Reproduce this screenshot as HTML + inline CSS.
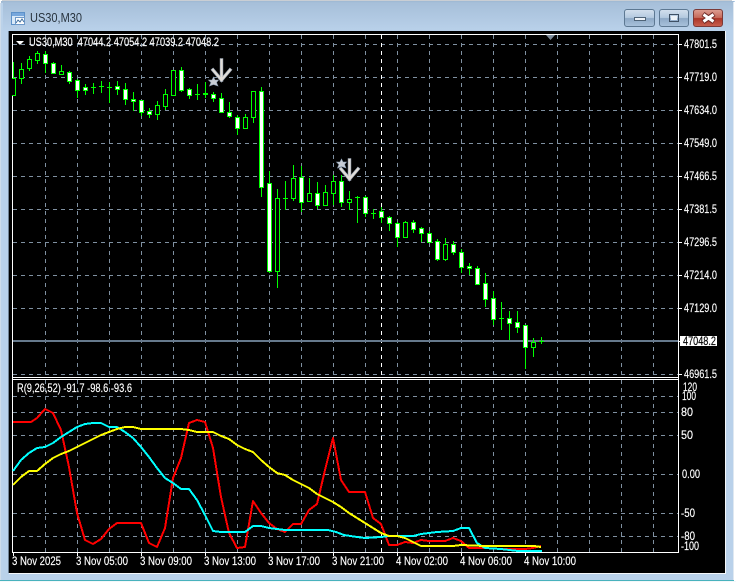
<!DOCTYPE html>
<html>
<head>
<meta charset="utf-8">
<title>US30,M30</title>
<style>
html,body{margin:0;padding:0;background:#fff}
body{width:736px;height:582px;overflow:hidden;position:relative}
svg{position:absolute;left:0;top:0;display:block}
text{font-family:"Liberation Sans",sans-serif;font-size:12px;fill:#fff;stroke:#fff;stroke-width:.15px}
.c{shape-rendering:crispEdges}
</style>
</head>
<body>
<svg width="736" height="582" viewBox="0 0 736 582" xmlns="http://www.w3.org/2000/svg">
<defs>
<linearGradient id="tb" x1="0" y1="0" x2="0" y2="1"><stop offset="0" stop-color="#9db7d2"/><stop offset=".05" stop-color="#a6bfd9"/><stop offset="1" stop-color="#b9d1ea"/></linearGradient>
<linearGradient id="bt" x1="0" y1="0" x2="0" y2="1"><stop offset="0" stop-color="#d3e0ee"/><stop offset=".48" stop-color="#b4c9df"/><stop offset=".52" stop-color="#8ea9c6"/><stop offset="1" stop-color="#a9c2dc"/></linearGradient>
<linearGradient id="cl" x1="0" y1="0" x2="0" y2="1"><stop offset="0" stop-color="#dd9f93"/><stop offset=".48" stop-color="#c66a5b"/><stop offset=".52" stop-color="#ab3527"/><stop offset="1" stop-color="#c9604f"/></linearGradient>
<linearGradient id="lf" x1="0" y1="0" x2="1" y2="0"><stop offset="0" stop-color="#e4e8ec"/><stop offset=".3" stop-color="#bcd2e9"/><stop offset="1" stop-color="#b9d1ea"/></linearGradient>
</defs>

<!-- window frame -->
<rect x="1" y="1" width="734" height="581" fill="#b9d1ea"/>
<rect x="1" y="1" width="733" height="30" fill="url(#tb)"/>
<rect x="0" y="3" width="3" height="579" fill="url(#lf)"/>
<rect x="2" y="0" width="730" height="1" fill="#c9ced4"/>
<rect x="733" y="2" width="1" height="578" fill="#dfe8f1"/>
<rect x="734" y="2" width="2" height="580" fill="#fff"/>
<rect x="0" y="580" width="734" height="1" fill="#49b2bd"/>
<rect x="0" y="581" width="736" height="1" fill="#f4f8fa"/>
<rect x="9" y="31" width="716" height="542" fill="#000"/>
<rect x="9" y="573" width="717" height="1" fill="#f4f7fa"/>
<rect x="725" y="31" width="1" height="543" fill="#f4f7fa"/>
<rect x="8" y="31" width="1" height="542" fill="#6f8193"/>

<!-- title icon -->
<g class="c">
<rect x="11.5" y="12.5" width="13" height="12" fill="#d9e9f8" stroke="#5d91c9"/>
<rect x="12" y="13" width="12" height="3" fill="#77a7dc"/>
<rect x="15.5" y="17.5" width="9" height="7" fill="#fff" stroke="#6f99c8"/>
</g>
<path d="M16 23l2-3 2 2 2-3 2 3" fill="none" stroke="#3f6f9f"/>
<text x="30" y="22" style="font-size:12.5px;fill:#27333e;stroke:none" textLength="52" lengthAdjust="spacingAndGlyphs">US30,M30</text>

<!-- buttons -->
<rect x="624.5" y="9.5" width="30" height="17" rx="2.5" fill="url(#bt)" stroke="#5d7892"/>
<rect x="659.5" y="9.5" width="29" height="17" rx="2.5" fill="url(#bt)" stroke="#5d7892"/>
<rect x="693.5" y="9.5" width="29" height="17" rx="2.5" fill="url(#cl)" stroke="#7b3a38"/>
<rect x="634.5" y="17.5" width="11" height="3" fill="#eef3f8" stroke="#4f6478" class="c"/>
<rect x="669.5" y="14.5" width="9" height="7" fill="none" stroke="#3e5064" stroke-width="1" class="c"/>
<rect x="671" y="16" width="6" height="4" fill="#eef3f8" class="c"/>
<path d="M703 14l11 8M714 14l-11 8" stroke="#6e2a25" stroke-width="5" fill="none"/>
<path d="M703.5 14.5l10 7M713.5 14.5l-10 7" stroke="#fff" stroke-width="3" fill="none"/>

<!-- grid -->
<g class="c" fill="none" stroke="#7f90a1" stroke-width="1" stroke-dasharray="4 4">
<path d="M13 44.5H678M13 77.5H678M13 110.5H678M13 143.5H678M13 176.5H678M13 209.5H678M13 242.5H678M13 275.5H678M13 308.5H678M13 374.5H678"/>
<path d="M13 396.5H678M13 412.5H678M13 435.5H678M13 474.5H678M13 513.5H678M13 536.5H678"/>
<path d="M45.5 35V377M77.5 35V377M109.5 35V377M141.5 35V377M173.5 35V377M205.5 35V377M237.5 35V377M269.5 35V377M301.5 35V377M333.5 35V377M365.5 35V377M397.5 35V377M429.5 35V377M461.5 35V377M493.5 35V377M525.5 35V377M557.5 35V377M589.5 35V377M621.5 35V377M653.5 35V377"/>
<path d="M45.5 380V552M77.5 380V552M109.5 380V552M141.5 380V552M173.5 380V552M205.5 380V552M237.5 380V552M269.5 380V552M301.5 380V552M333.5 380V552M365.5 380V552M397.5 380V552M429.5 380V552M461.5 380V552M493.5 380V552M525.5 380V552M557.5 380V552M589.5 380V552M621.5 380V552M653.5 380V552"/>
<path d="M381.5 35V377M381.5 380V552" stroke="#fff"/>
</g>
<rect x="13" y="340" width="665" height="2" fill="#66798c" class="c"/>

<!-- shift triangle -->
<path d="M546 35h9l-4.500 5z" fill="#7b8a99"/>

<!-- frame -->
<g class="c" fill="none" stroke="#fff" stroke-width="1">
<path d="M12.500 34.500H678.500V552.500H12.500z"/>
<path d="M12 377.500H679M12 379.500H679"/>
<path d="M13.500 553V556M77.500 553V556M141.500 553V556M205.500 553V556M269.500 553V556M333.500 553V556M397.500 553V556M461.500 553V556M525.500 553V556"/>
<path d="M679 44.500H682M679 77.500H682M679 110.500H682M679 143.500H682M679 176.500H682M679 209.500H682M679 242.500H682M679 275.500H682M679 308.500H682M679 374.500H682"/>
</g>

<!-- candles: wicks and doji bars -->
<g class="c">
<path fill="#00ff00" d="M13 62h1V95h-1zM21 63h1V84h-1zM29 56h1V71h-1zM37 51h1V64h-1zM45 51h1V73h-1zM53 62h1V74h-1zM61 65h1V75h-1zM69 71h1V84h-1zM77 79h1V98h-1zM85 84h1V95h-1zM93 83h1V94h-1zM101 81h1V93h-1zM109 82h1V103h-1zM117 81h1V95h-1zM125 83h1V105h-1zM133 92h1V111h-1zM141 100h1V116h-1zM149 108h1V118h-1zM157 101h1V120h-1zM165 89h1V110h-1zM173 70h1V96h-1zM181 67h1V92h-1zM189 88h1V99h-1zM197 84h1V100h-1zM205 82h1V98h-1zM213 92h1V102h-1zM221 93h1V112h-1zM229 102h1V118h-1zM237 115h1V135h-1zM245 114h1V128h-1zM253 91h1V123h-1zM261 87h1V197h-1zM269 171h1V273h-1zM277 189h1V288h-1zM285 181h1V210h-1zM293 165h1V201h-1zM301 166h1V212h-1zM309 178h1V202h-1zM317 182h1V209h-1zM325 185h1V205h-1zM333 175h1V205h-1zM341 175h1V207h-1zM349 191h1V210h-1zM357 196h1V223h-1zM365 196h1V217h-1zM373 209h1V219h-1zM381 207h1V223h-1zM389 216h1V231h-1zM397 222h1V247h-1zM405 221h1V237h-1zM413 220h1V233h-1zM421 227h1V242h-1zM429 231h1V243h-1zM437 239h1V261h-1zM445 238h1V261h-1zM453 241h1V255h-1zM461 249h1V273h-1zM469 263h1V275h-1zM477 266h1V285h-1zM485 273h1V307h-1zM493 291h1V325h-1zM501 302h1V330h-1zM509 311h1V340h-1zM517 311h1V333h-1zM525 325h1V369h-1zM533 338h1V357h-1zM541 337h1V344h-1z"/>
<path fill="#00ff00" d="M91 87h5v1h-5zM99 86h5v1h-5zM107 87h5v1h-5zM283 198h5v1h-5zM355 197h5v1h-5zM371 213h5v1h-5zM499 318h5v1h-5zM539 341h5v1h-5zM195 94h5v1h-5zM203 93h5v2h-5z"/>
<!-- bodies outer -->
<path fill="#00ff00" d="M12 78h4V96h-4zM19 69h5V79h-5zM27 59h5V69h-5zM35 53h5V61h-5zM59 71h5V75h-5zM155 105h5V115h-5zM163 94h5V107h-5zM171 70h5V96h-5zM243 117h5V129h-5zM251 91h5V118h-5zM275 198h5V272h-5zM291 178h5V199h-5zM307 193h5V202h-5zM323 192h5V206h-5zM331 181h5V194h-5zM347 199h5V203h-5zM403 222h5V238h-5zM443 244h5V260h-5zM531 342h5V348h-5z"/>
<path fill="#00ff00" d="M43 54h5V64h-5zM51 63h5V74h-5zM67 72h5V82h-5zM75 80h5V91h-5zM83 87h5V91h-5zM115 86h5V90h-5zM123 89h5V100h-5zM131 99h5V102h-5zM139 100h5V113h-5zM147 111h5V115h-5zM179 70h5V91h-5zM187 89h5V96h-5zM211 94h5V99h-5zM219 98h5V113h-5zM227 112h5V117h-5zM235 117h5V129h-5zM259 91h5V188h-5zM267 183h5V272h-5zM299 177h5V203h-5zM315 193h5V206h-5zM339 181h5V203h-5zM363 197h5V214h-5zM379 211h5V218h-5zM387 217h5V224h-5zM395 223h5V238h-5zM411 222h5V230h-5zM419 228h5V234h-5zM427 233h5V243h-5zM435 241h5V260h-5zM451 244h5V253h-5zM459 252h5V268h-5zM467 266h5V269h-5zM475 268h5V285h-5zM483 283h5V300h-5zM491 298h5V320h-5zM507 318h5V324h-5zM515 322h5V328h-5zM523 325h5V348h-5z"/>
<!-- hollow inner -->
<path fill="#000" d="M12 79h3V95h-3zM20 70h3V78h-3zM28 60h3V68h-3zM36 54h3V60h-3zM60 72h3V74h-3zM156 106h3V114h-3zM164 95h3V106h-3zM172 71h3V95h-3zM244 118h3V128h-3zM252 92h3V117h-3zM276 199h3V271h-3zM292 179h3V198h-3zM308 194h3V201h-3zM324 193h3V205h-3zM332 182h3V193h-3zM348 200h3V202h-3zM404 223h3V237h-3zM444 245h3V259h-3zM532 343h3V347h-3z"/>
<!-- white inner -->
<path fill="#fff" d="M44 55h3V63h-3zM52 64h3V73h-3zM68 73h3V81h-3zM76 81h3V90h-3zM84 88h3V90h-3zM116 87h3V89h-3zM124 90h3V99h-3zM132 100h3V101h-3zM140 101h3V112h-3zM148 112h3V114h-3zM180 71h3V90h-3zM188 90h3V95h-3zM212 95h3V98h-3zM220 99h3V112h-3zM228 113h3V116h-3zM236 118h3V128h-3zM260 92h3V187h-3zM268 184h3V271h-3zM300 178h3V202h-3zM316 194h3V205h-3zM340 182h3V202h-3zM364 198h3V213h-3zM380 212h3V217h-3zM388 218h3V223h-3zM396 224h3V237h-3zM412 223h3V229h-3zM420 229h3V233h-3zM428 234h3V242h-3zM436 242h3V259h-3zM452 245h3V252h-3zM460 253h3V267h-3zM468 267h3V268h-3zM476 269h3V284h-3zM484 284h3V299h-3zM492 299h3V319h-3zM508 319h3V323h-3zM516 323h3V327h-3zM524 326h3V347h-3z"/>
</g>

<!-- arrows -->
<g fill="none" stroke-linecap="square">
<path d="M221.500 60V80M213 70l8.500 10 8.500-10" stroke="#a6afbc" stroke-width="3.400"/>
<path d="M221.500 60V80M213 70l8.500 10 8.500-10" stroke="#e2ded8" stroke-width="2"/>
<path d="M349.500 160V179M341 169l8.500 10 8.500-10" stroke="#a6afbc" stroke-width="3.400"/>
<path d="M349.500 160V179M341 169l8.500 10 8.500-10" stroke="#e2ded8" stroke-width="2"/>
</g>
<path d="M213.500 77l1.500 3 3.500 0-2 2.500 1.500 3.500-4.500-1.500-4 1.500 1.500-3.500-2.500-2.500 3.500 0z" fill="#c9cdd4" stroke="#8fa0b4" stroke-width=".6"/>
<path d="M341.500 159l1.500 3 3.500 0-2 2.500 1.500 3.500-4.500-1.500-4 1.500 1.500-3.500-2.500-2.500 3.500 0z" fill="#c9cdd4" stroke="#8fa0b4" stroke-width=".6"/>

<!-- indicator -->
<g fill="none" stroke-width="2" class="c" stroke-linejoin="round">
<polyline stroke="#ff0000" points="13,422 31,422 37,418 45,409 53,413 61,430 69,467 77,513 85,540 93,544 101,539 109,529 117,523 141,523 149,543 157,547 165,528 173,478 181,458 189,423 197,420 205,422 213,448 221,497 229,533 237,548 245,547 253,501 261,513 269,523 277,529 285,532 293,524 301,524 309,510 317,504 325,470 333,438 341,480 349,492 365,492 373,518 381,524 389,545 397,545 405,542 413,543 421,540 429,541 445,541 453,538 461,541 469,548 485,548 501,549 525,549 533,548 541,546"/>
<polyline stroke="#00ffff" points="13,471 21,460 29,453 37,448 45,447 53,443 61,437 69,432 77,427 85,424 93,423 101,423 109,427 117,427 125,432 133,438 141,447 149,457 157,468 165,478 173,483 181,489 189,489 197,500 205,515 213,531 221,532 245,532 253,526 261,526 269,528 277,529 285,530 328,530 336,532 344,535 357,537 365,538 381,537 389,536 413,536 421,534 429,533 437,532 453,531 461,528 469,528 477,543 485,548 501,549 518,551 542,551"/>
<polyline stroke="#ffff00" points="13,485 21,477 29,471 37,471 45,464 53,458 61,454 69,451 77,447 85,443 93,439 101,435 109,432 117,429 125,427 133,427 141,429 165,429 173,429 181,429 189,430 197,432 213,432 221,436 229,439 237,445 245,449 253,452 261,460 269,467 277,473 285,475 293,480 309,488 317,494 325,498 333,502 341,507 349,513 357,518 365,523 373,528 381,533 389,536 397,536 405,538 413,542 421,546 453,546 461,545 485,546 534,546 541,547"/>
</g>

<!-- legends -->
<path d="M16 41h8l-4 4z" fill="#fff"/>
<text x="29" y="46" textLength="190" lengthAdjust="spacingAndGlyphs" xml:space="preserve">US30,M30  47044.2 47054.2 47039.2 47048.2</text>
<text x="17" y="392" textLength="115" lengthAdjust="spacingAndGlyphs">R(9,26,52) -91.7 -98.6 -93.6</text>

<!-- price axis -->
<text x="684" y="48" textLength="33" lengthAdjust="spacingAndGlyphs">47801.5</text>
<text x="684" y="81" textLength="33" lengthAdjust="spacingAndGlyphs">47719.0</text>
<text x="684" y="114" textLength="33" lengthAdjust="spacingAndGlyphs">47634.0</text>
<text x="684" y="147" textLength="33" lengthAdjust="spacingAndGlyphs">47549.0</text>
<text x="684" y="180" textLength="33" lengthAdjust="spacingAndGlyphs">47466.5</text>
<text x="684" y="213" textLength="33" lengthAdjust="spacingAndGlyphs">47381.5</text>
<text x="684" y="246" textLength="33" lengthAdjust="spacingAndGlyphs">47296.5</text>
<text x="684" y="279" textLength="33" lengthAdjust="spacingAndGlyphs">47214.0</text>
<text x="684" y="312" textLength="33" lengthAdjust="spacingAndGlyphs">47129.0</text>
<rect x="680" y="336" width="37" height="10" fill="#fff" class="c"/>
<rect x="679" y="341" width="1" height="1" fill="#fff" class="c"/>
<text x="683" y="345" style="fill:#000;stroke:#000" textLength="33" lengthAdjust="spacingAndGlyphs">47048.2</text>
<text x="684" y="378" textLength="33" lengthAdjust="spacingAndGlyphs">46961.5</text>

<!-- indicator axis -->
<text x="683" y="391" textLength="14" lengthAdjust="spacingAndGlyphs">120</text>
<text x="682" y="400" textLength="14" lengthAdjust="spacingAndGlyphs">100</text>
<text x="681" y="416" textLength="12" lengthAdjust="spacingAndGlyphs">80</text>
<text x="681" y="439" textLength="12" lengthAdjust="spacingAndGlyphs">50</text>
<text x="682" y="478" textLength="18" lengthAdjust="spacingAndGlyphs">0.00</text>
<text x="681" y="517" textLength="14" lengthAdjust="spacingAndGlyphs">-50</text>
<text x="681" y="540" textLength="14" lengthAdjust="spacingAndGlyphs">-80</text>
<text x="681" y="550" textLength="18" lengthAdjust="spacingAndGlyphs">-100</text>

<!-- time axis -->
<text x="12" y="565" textLength="49" lengthAdjust="spacingAndGlyphs">3 Nov 2025</text>
<text x="76" y="565" textLength="52" lengthAdjust="spacingAndGlyphs">3 Nov 05:00</text>
<text x="140" y="565" textLength="52" lengthAdjust="spacingAndGlyphs">3 Nov 09:00</text>
<text x="204" y="565" textLength="52" lengthAdjust="spacingAndGlyphs">3 Nov 13:00</text>
<text x="268" y="565" textLength="52" lengthAdjust="spacingAndGlyphs">3 Nov 17:00</text>
<text x="332" y="565" textLength="52" lengthAdjust="spacingAndGlyphs">3 Nov 21:00</text>
<text x="396" y="565" textLength="52" lengthAdjust="spacingAndGlyphs">4 Nov 02:00</text>
<text x="460" y="565" textLength="52" lengthAdjust="spacingAndGlyphs">4 Nov 06:00</text>
<text x="524" y="565" textLength="52" lengthAdjust="spacingAndGlyphs">4 Nov 10:00</text>
</svg>
</body>
</html>
